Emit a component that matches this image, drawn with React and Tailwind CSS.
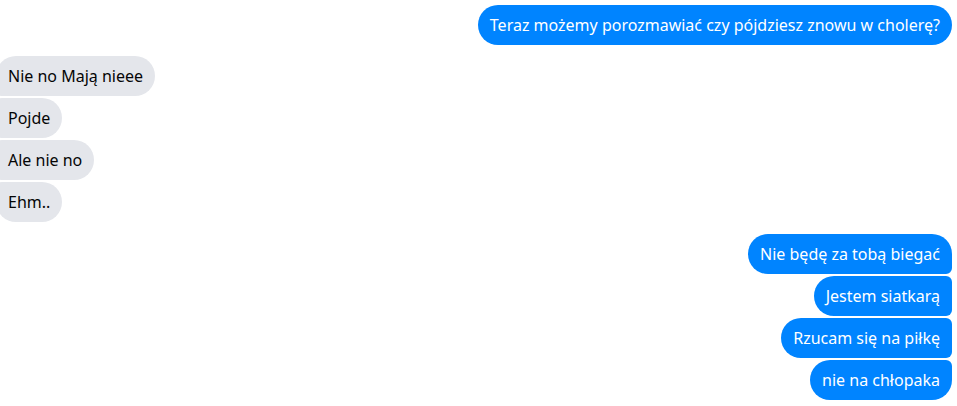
const mine = [
  ['Nie będę za tobą biegać', 'rounded-[20px] rounded-br-[6px]'],
  ['Jestem siatkarą', 'rounded-[20px] rounded-r-[6px]'],
  ['Rzucam się na piłkę', 'rounded-[20px] rounded-r-[6px]'],
  ['nie na chłopaka', 'rounded-[20px] rounded-tr-[6px]'],
];

const theirs = [
  ['Nie no Mają nieee', 'rounded-[20px] rounded-bl-[6px]'],
  ['Pojde', 'rounded-[20px] rounded-l-[6px]'],
  ['Ale nie no', 'rounded-[20px] rounded-l-[6px]'],
  ['Ehm..', 'rounded-[20px] rounded-tl-[6px]'],
];

const Bubble = ({ text, shape, out }) => (
  <div
    className={`px-3 h-10 flex items-center text-[16px] leading-5 whitespace-nowrap ${shape} ${
      out ? 'bg-[#0084ff] text-white' : 'bg-[#e4e6eb] text-[#050505]'
    }`}
  >
    {text}
  </div>
);

export default function App() {
  return (
    <div
      className="w-[957px] h-[406px] bg-white overflow-hidden flex flex-col pt-[5px] pr-[5px]"
      style={{ fontFamily: '"Noto Sans", "Open Sans", sans-serif' }}
    >
      <div className="flex justify-end">
        <Bubble text="Teraz możemy porozmawiać czy pójdziesz znowu w cholerę?" shape="rounded-[20px]" out />
      </div>

      <div className="flex flex-col items-start gap-[2px] mt-[11px] -ml-1">
        {theirs.map(([t, s]) => (
          <Bubble key={t} text={t} shape={s} />
        ))}
      </div>

      <div className="flex flex-col items-end gap-[2px] mt-[12px]">
        {mine.map(([t, s]) => (
          <Bubble key={t} text={t} shape={s} out />
        ))}
      </div>
    </div>
  );
}
